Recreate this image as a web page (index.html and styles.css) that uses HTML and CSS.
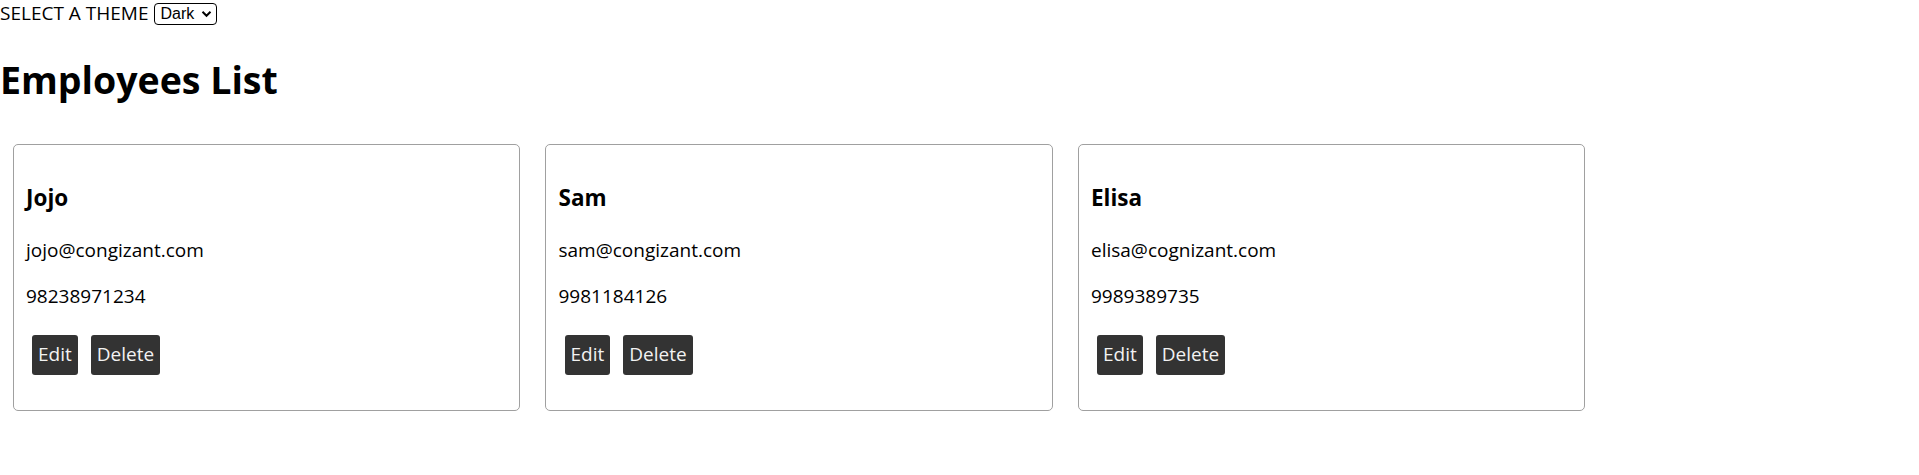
FILE: index.html
```html
<!DOCTYPE html>
<html lang="en">
<head>
<meta charset="utf-8">
<title>Employees List</title>
<link rel="stylesheet" href="styles.css">
</head>
<body>
<div class="theme-bar">
  <span class="theme-label">SELECT A THEME</span>
  <span class="select-wrap">
    <select class="theme-select">
      <option>Dark</option>
      <option>Light</option>
    </select>
    <svg class="chev" width="11" height="8" viewBox="0 0 11 8"><path d="M1.5 1.8 L5.5 5.8 L9.5 1.8" fill="none" stroke="#000" stroke-width="2"/></svg>
  </span>
</div>
<h1 class="title">Employees List</h1>
<div class="list">
  <div class="card">
    <h3 class="name">Jojo</h3>
    <p class="info">jojo@congizant.com</p>
    <p class="info">98238971234</p>
    <div class="actions"><button class="btn">Edit</button><button class="btn">Delete</button></div>
  </div>
  <div class="card">
    <h3 class="name">Sam</h3>
    <p class="info">sam@congizant.com</p>
    <p class="info">9981184126</p>
    <div class="actions"><button class="btn">Edit</button><button class="btn">Delete</button></div>
  </div>
  <div class="card">
    <h3 class="name">Elisa</h3>
    <p class="info">elisa@cognizant.com</p>
    <p class="info">9989389735</p>
    <div class="actions"><button class="btn">Edit</button><button class="btn">Delete</button></div>
  </div>
</div>
</body>
</html>
```
FILE: styles.css
```css
* { box-sizing: border-box; }
html, body { margin: 0; padding: 0; background: #fff; }
body {
  font-family: "Open Sans", "Noto Sans", sans-serif;
  font-size: 19px;
  color: #000;
}
.theme-bar {
  height: 26px;
  display: flex;
  align-items: center;
  gap: 6px;
}
.theme-label { line-height: 26px; }
.select-wrap {
  position: relative;
  display: inline-flex;
  margin-top: 1px;
}
.theme-select {
  appearance: none;
  -webkit-appearance: none;
  width: 63px;
  height: 22px;
  border: 1.5px solid #000;
  border-radius: 4px;
  background: #fff;
  font-family: "Liberation Sans", Arial, sans-serif;
  font-size: 16px;
  padding: 0 0 0 5px;
  color: #000;
  line-height: 19px;
}
.chev {
  position: absolute;
  right: 5px;
  top: 7px;
  pointer-events: none;
}
.title {
  font-size: 37.5px;
  font-weight: 700;
  line-height: 53px;
  margin: 27px 0 38px 0;
}
.list {
  display: flex;
  gap: 25px;
  padding: 0 12.5px;
}
.card {
  width: 507.5px;
  border: 1px solid #a0a0a0;
  border-radius: 5px;
  padding: 12.5px;
}
.name {
  font-size: 22.5px;
  font-weight: 700;
  line-height: 31px;
  margin: 24.5px 0 23.5px 0;
}
.info {
  line-height: 26.6px;
  margin: 20px 0;
}
.actions {
  display: flex;
  gap: 13px;
  padding: 5px 0 5px 6px;
  margin: 17px 0 18px 0;
}
.btn {
  font-family: "Open Sans", "Noto Sans", sans-serif;
  font-size: 19px;
  line-height: 26.6px;
  height: 40px;
  padding: 0 6px;
  border: none;
  border-radius: 3px;
  background: #333;
  color: #f2f2f2;
}
```
